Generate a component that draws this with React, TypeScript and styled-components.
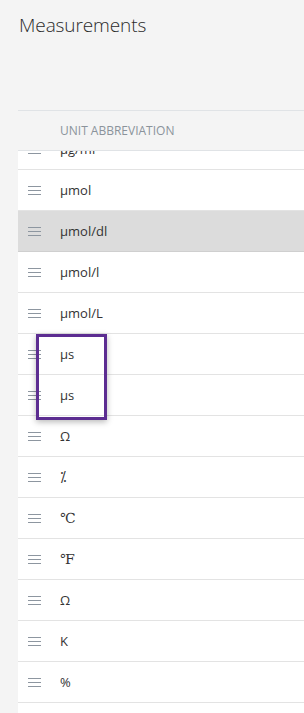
import React from "react";
import styled, { createGlobalStyle } from "styled-components";

const Global = createGlobalStyle`
  html, body { margin: 0; padding: 0; background: #f4f4f4; }
  body { font-family: "Open Sans", "Noto Sans", sans-serif; overflow: hidden; }
`;

const Page = styled.div`
  height: 713px;
  display: flex;
  flex-direction: column;
  padding-left: 18px;
  box-sizing: border-box;
  background: #f4f4f4;
`;

const Title = styled.h1`
  margin: 0;
  padding: 12px 0 0 1px;
  height: 110px;
  flex: none;
  box-sizing: border-box;
  font-family: "Open Sans", sans-serif;
  font-weight: 300;
  font-size: 19px;
  line-height: 26px;
  color: #2b2b2b;
  letter-spacing: -0.1px;
`;

const HeaderRow = styled.div`
  height: 41px;
  flex: none;
  box-sizing: border-box;
  border-top: 1px solid #e0e3e6;
  border-bottom: 1px solid #e0e3e6;
  display: flex;
  align-items: center;
  padding-left: 42px;
  font-size: 12px;
  color: #8b939b;
  text-transform: uppercase;
`;

const ListViewport = styled.div`
  position: relative;
  flex: 1;
  overflow: hidden;
  background: #ffffff;
`;

const ListInner = styled.div`
  margin-top: -22px;
`;

const Row = styled.div<{ $selected?: boolean }>`
  height: 41px;
  box-sizing: border-box;
  border-bottom: 1px solid ${(p) => (p.$selected ? "#cfcfcf" : "#e3e3e3")};
  display: flex;
  align-items: center;
  padding-left: 10px;
  gap: 19px;
  background: ${(p) => (p.$selected ? "#dcdcdc" : "#ffffff")};
`;

const Handle = styled.span`
  width: 13px;
  display: flex;
  flex-direction: column;
  gap: 3px;
  flex: none;
  & > i {
    display: block;
    height: 1px;
    background: #8d96a0;
  }
`;

const Label = styled.span<{ $serif?: boolean }>`
  font-family: ${(p) =>
    p.$serif ? '"Liberation Serif", "DejaVu Serif", serif' : '"Open Sans", sans-serif'};
  font-size: ${(p) => (p.$serif ? "14px" : "13px")};
  color: #333333;
`;

const FocusBox = styled.div`
  position: absolute;
  left: 18px;
  top: 183px;
  width: 71px;
  height: 86px;
  box-sizing: border-box;
  border: 3px solid #5c2d91;
  box-shadow: 0 2px 6px rgba(0, 0, 0, 0.28);
  pointer-events: none;
`;

const rows: { text: string; serif?: boolean; selected?: boolean }[] = [
  { text: "µg/ml" },
  { text: "µmol" },
  { text: "µmol/dl", selected: true },
  { text: "µmol/l" },
  { text: "µmol/L" },
  { text: "µs" },
  { text: "µs" },
  { text: "Ω" },
  { text: "⁒", serif: true },
  { text: "℃", serif: true },
  { text: "℉", serif: true },
  { text: "Ω" },
  { text: "K" },
  { text: "%" },
  { text: "‰" },
];

export default function App() {
  return (
    <>
      <Global />
      <Page>
        <Title>Measurements</Title>
        <HeaderRow>Unit abbreviation</HeaderRow>
        <ListViewport>
          <ListInner>
            {rows.map((r, i) => (
              <Row key={i} $selected={r.selected}>
                <Handle>
                  <i />
                  <i />
                  <i />
                </Handle>
                <Label $serif={r.serif}>{r.text}</Label>
              </Row>
            ))}
          </ListInner>
          <FocusBox />
        </ListViewport>
      </Page>
    </>
  );
}
